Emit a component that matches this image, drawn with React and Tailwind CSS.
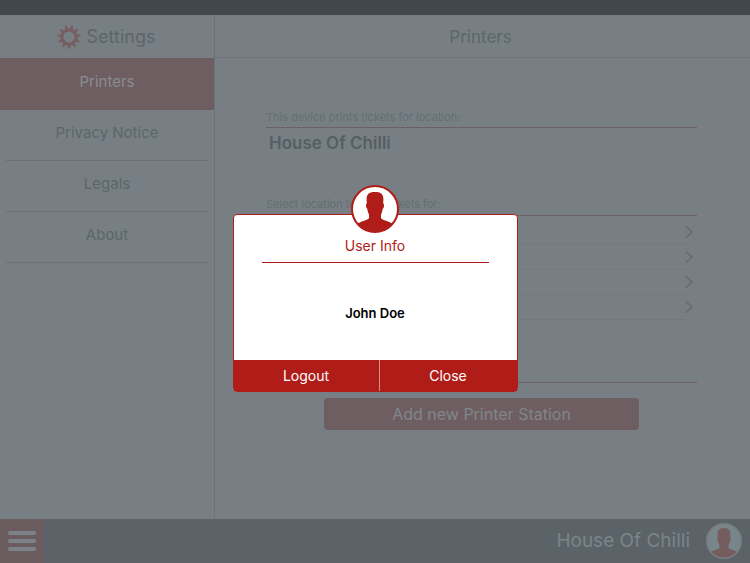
import { useState } from 'react';

const MENU_ITEMS = ['Printers', 'Privacy Notice', 'Legals', 'About'];
const LOCATIONS = ['Location 1', 'Location 2', 'Location 3', 'Location 4'];

function GearIcon() {
  const teeth = Array.from({ length: 11 }, (_, i) => (i * 360) / 11);
  return (
    <svg viewBox="0 0 24 24" className="size-6" aria-hidden="true">
      <circle cx="12" cy="12" r="6.8" fill="none" stroke="#765e61" strokeWidth="2.6" />
      {teeth.map((angle) => (
        <path
          key={angle}
          d="M9.8 5 L11.4 0.3 H12.6 L14.2 5 Z"
          fill="#765e61"
          transform={`rotate(${angle + 16} 12 12)`}
        />
      ))}
    </svg>
  );
}

function Avatar({ className, ring, back, figure }) {
  return (
    <svg viewBox="0 0 48 48" className={className} aria-hidden="true">
      <defs>
        <clipPath id={`clip-${figure.slice(1)}`}>
          <circle cx="24" cy="24" r="22.5" />
        </clipPath>
      </defs>
      <circle cx="24" cy="24" r="23" fill={back} />
      <path
        clipPath={`url(#clip-${figure.slice(1)})`}
        fill={figure}
        d="M24 7 C29.8 6.8 32.4 9.4 32.4 14 L32.2 18.6 C33.4 18.6 33.2 22.8 31.8 23.6 C31.4 26.2 30.9 28 30 29.4 V33 C31 35 36 35.8 42 38.6 V48 H6 V38.6 C12 35.8 17 35 18 33 V29.4 C17.1 28 16.6 26.2 16.2 23.6 C14.8 22.8 14.6 18.6 15.8 18.6 L15.6 14 C15.6 9.4 18.2 6.8 24 7 Z"
      />
      <circle cx="24" cy="24" r="23" fill="none" stroke={ring} strokeWidth="2" />
    </svg>
  );
}

function ChevronIcon() {
  return (
    <svg viewBox="0 0 8 14" className="h-3.5 w-2" aria-hidden="true">
      <path d="M1 1.5 L7 7 L1 12.5" fill="none" stroke="#6b6569" strokeWidth="1.3" />
    </svg>
  );
}

function Sidebar({ active, onSelect }) {
  return (
    <aside className="flex w-[215px] shrink-0 flex-col border-r border-[#6c7479]">
      <h1 className="flex h-[43px] items-center justify-center gap-1.5 pr-0.5 text-[18px] text-[#5d656a]">
        <GearIcon />
        Settings
      </h1>
      <nav className="flex flex-col">
        {MENU_ITEMS.map((item) => (
          <button
            key={item}
            type="button"
            onClick={() => onSelect(item)}
            className={
              item === active
                ? 'h-[52px] bg-[#6e5e61] pb-1 text-[15px] text-[#888c91]'
                : 'mx-1.5 h-[51px] border-b border-[#706f72] pb-1 text-[15px] text-[#5d656a]'
            }
          >
            {item}
          </button>
        ))}
      </nav>
    </aside>
  );
}

function PrinterSettings() {
  return (
    <main className="flex flex-1 flex-col">
      <h2 className="flex h-[43px] items-center justify-center border-b border-[#6c7479] pt-1 pr-1 text-[17px] text-[#5d656a]">
        Printers
      </h2>
      <div className="flex flex-col pt-[51px] pr-[53px] pl-[51px]">
        <p className="border-b border-[#6d5f64] pb-0.5 text-[11px] leading-4 text-[#656d72]">
          This device prints tickets for location:
        </p>
        <p className="px-[3px] pt-[3px] text-[17px] leading-6 font-semibold text-[#565e63]">
          House Of Chilli
        </p>
        <p className="mt-[41px] border-b border-[#6d5f64] pb-[3px] text-[11px] leading-4 text-[#656d72]">
          Select location to print tickets for:
        </p>
        <ul className="h-[167px] border-b border-[#6d5f64] pt-1">
          {LOCATIONS.map((location) => (
            <li key={location} className="mr-1">
              <button
                type="button"
                aria-label={location}
                className="flex h-[25px] w-full items-center justify-end border-b border-[#737a7f]"
              >
                <ChevronIcon />
              </button>
            </li>
          ))}
        </ul>
        <button
          type="button"
          className="mx-[58px] mt-[15px] h-8 rounded bg-[#6e5e61] text-[16px] text-[#80868b]"
        >
          Add new Printer Station
        </button>
      </div>
    </main>
  );
}

function BottomBar({ onOpenUser }) {
  return (
    <footer className="flex h-11 shrink-0 items-center bg-[#5b6369]">
      <button
        type="button"
        aria-label="Menu"
        className="flex h-full w-11 flex-col items-center justify-center gap-1 bg-[#6b5c60]"
      >
        <span className="h-1 w-7 rounded-full bg-[#7c8287]" />
        <span className="h-1 w-7 rounded-full bg-[#7c8287]" />
        <span className="h-1 w-7 rounded-full bg-[#7c8287]" />
      </button>
      <span className="ml-auto text-[19px] text-[#7b8388]">House Of Chilli</span>
      <button type="button" aria-label="User info" onClick={onOpenUser} className="mr-2 ml-4">
        <Avatar className="size-9" ring="#7a7c80" back="#78858a" figure="#745c5f" />
      </button>
    </footer>
  );
}

function UserDialog({ onClose }) {
  return (
    <div className="fixed inset-0 flex items-center justify-center pt-[43px]">
      <section
        role="dialog"
        aria-labelledby="user-info-title"
        className="relative flex w-[285px] flex-col rounded border border-[#b01c18] bg-white"
      >
        <Avatar
          className="absolute -top-[30px] left-1/2 size-12 -translate-x-1/2"
          ring="#b01c18"
          back="#ffffff"
          figure="#b01c18"
        />
        <h2
          id="user-info-title"
          className="mx-7 border-b border-[#b01c18] pt-[21px] pb-1.5 text-center text-[14px] leading-5 text-[#b01c18]"
        >
          User Info
        </h2>
        <p className="pt-10 pb-[37px] text-center text-[13px] leading-5 font-semibold text-black">
          John Doe
        </p>
        <div className="flex h-[31px] bg-[#b01c18] text-[14px] text-white">
          <button type="button" className="w-[146px] border-r border-[#d98a88]">
            Logout
          </button>
          <button type="button" onClick={onClose} className="flex-1">
            Close
          </button>
        </div>
      </section>
    </div>
  );
}

export default function App() {
  const [active, setActive] = useState('Printers');
  const [userOpen, setUserOpen] = useState(true);

  return (
    <div className="flex h-screen flex-col bg-[#777f84] font-['Inter','Liberation_Sans',sans-serif]">
      <div className="h-[15px] shrink-0 bg-[#40484e]" />
      <div className="flex min-h-0 flex-1">
        <Sidebar active={active} onSelect={setActive} />
        <PrinterSettings />
      </div>
      <BottomBar onOpenUser={() => setUserOpen(true)} />
      {userOpen && <UserDialog onClose={() => setUserOpen(false)} />}
    </div>
  );
}
